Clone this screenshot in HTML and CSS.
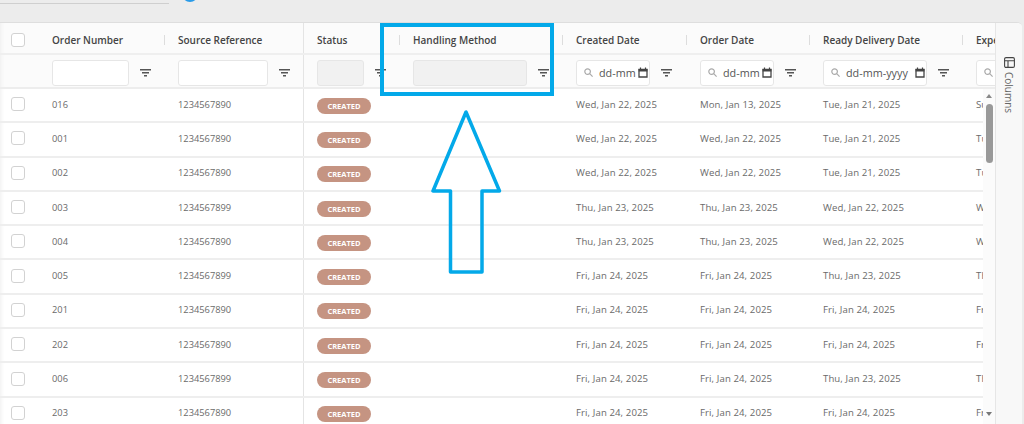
FILE: index.html
```html
<!DOCTYPE html>
<html lang="en">
<head>
<meta charset="utf-8">
<title>Orders</title>
<link rel="stylesheet" href="styles.css">
</head>
<body>
<svg width="0" height="0" class="defs">
  <symbol id="filter" viewBox="0 0 11 8"><path d="M0 .75h11M2 3.75h7M4 6.75h3" fill="none" stroke="#555" stroke-width="1.4"/></symbol>
  <symbol id="search" viewBox="0 0 9 9"><circle cx="3.6" cy="3.6" r="2.8" fill="none" stroke="#aaa" stroke-width="1.2"/><path d="M5.7 5.7L8.6 8.6" stroke="#aaa" stroke-width="1.2"/></symbol>
  <symbol id="cal" viewBox="0 0 10 11"><path d="M1 2.5h8v7.5H1z" fill="none" stroke="#444" stroke-width="1.3"/><path d="M.6 2h8.8v2.6H.6z" fill="#444"/><path d="M2.5 .5v2M7.5 .5v2" stroke="#444" stroke-width="1.2"/></symbol>
</svg>
<div class="top"><span class="top-field"></span><span class="top-dot"></span></div>
<main class="card">
  <div class="table">
    <div class="grid head">
      <div class="hc first"><span class="box"></span></div>
      <div class="hc sep">Order Number</div>
      <div class="hc sep">Source Reference</div>
      <div class="hc divide sep">Status</div>
      <div class="hc sep">Handling Method</div>
      <div class="hc sep">Created Date</div>
      <div class="hc sep">Order Date</div>
      <div class="hc sep">Ready Delivery Date</div>
      <div class="hc">Expected Date</div>
    </div>
    <div class="grid filters">
      <div class="fc first"></div>
      <div class="fc"><span class="inp"></span><svg class="fi"><use href="#filter"/></svg></div>
      <div class="fc"><span class="inp"></span><svg class="fi"><use href="#filter"/></svg></div>
      <div class="fc divide"><span class="inp off"></span><svg class="fi"><use href="#filter"/></svg></div>
      <div class="fc"><span class="inp off"></span><svg class="fi"><use href="#filter"/></svg></div>
      <div class="fc"><span class="inp date"><svg class="si"><use href="#search"/></svg><span class="dt">dd-mm</span><svg class="ci"><use href="#cal"/></svg></span><svg class="fi"><use href="#filter"/></svg></div>
      <div class="fc"><span class="inp date"><svg class="si"><use href="#search"/></svg><span class="dt">dd-mm</span><svg class="ci"><use href="#cal"/></svg></span><svg class="fi"><use href="#filter"/></svg></div>
      <div class="fc"><span class="inp date"><svg class="si"><use href="#search"/></svg><span class="dt">dd-mm-yyyy</span><svg class="ci"><use href="#cal"/></svg></span><svg class="fi"><use href="#filter"/></svg></div>
      <div class="fc"><span class="inp date"><svg class="si"><use href="#search"/></svg></span></div>
    </div>
    <div class="body">
      <div class="rows">
        <div class="grid row"><div class="c first"><span class="box"></span></div><div class="c">016</div><div class="c">1234567890</div><div class="c divide"><span class="badge">CREATED</span></div><div class="c"></div><div class="c">Wed, Jan 22, 2025</div><div class="c">Mon, Jan 13, 2025</div><div class="c">Tue, Jan 21, 2025</div><div class="c">Sun, Jan 19, 2025</div></div>
        <div class="grid row"><div class="c first"><span class="box"></span></div><div class="c">001</div><div class="c">1234567890</div><div class="c divide"><span class="badge">CREATED</span></div><div class="c"></div><div class="c">Wed, Jan 22, 2025</div><div class="c">Wed, Jan 22, 2025</div><div class="c">Tue, Jan 21, 2025</div><div class="c">Tue, Jan 21, 2025</div></div>
        <div class="grid row"><div class="c first"><span class="box"></span></div><div class="c">002</div><div class="c">1234567890</div><div class="c divide"><span class="badge">CREATED</span></div><div class="c"></div><div class="c">Wed, Jan 22, 2025</div><div class="c">Wed, Jan 22, 2025</div><div class="c">Tue, Jan 21, 2025</div><div class="c">Tue, Jan 21, 2025</div></div>
        <div class="grid row"><div class="c first"><span class="box"></span></div><div class="c">003</div><div class="c">1234567899</div><div class="c divide"><span class="badge">CREATED</span></div><div class="c"></div><div class="c">Thu, Jan 23, 2025</div><div class="c">Thu, Jan 23, 2025</div><div class="c">Wed, Jan 22, 2025</div><div class="c">Wed, Jan 22, 2025</div></div>
        <div class="grid row"><div class="c first"><span class="box"></span></div><div class="c">004</div><div class="c">1234567890</div><div class="c divide"><span class="badge">CREATED</span></div><div class="c"></div><div class="c">Thu, Jan 23, 2025</div><div class="c">Thu, Jan 23, 2025</div><div class="c">Wed, Jan 22, 2025</div><div class="c">Wed, Jan 22, 2025</div></div>
        <div class="grid row"><div class="c first"><span class="box"></span></div><div class="c">005</div><div class="c">1234567899</div><div class="c divide"><span class="badge">CREATED</span></div><div class="c"></div><div class="c">Fri, Jan 24, 2025</div><div class="c">Fri, Jan 24, 2025</div><div class="c">Thu, Jan 23, 2025</div><div class="c">Thu, Jan 23, 2025</div></div>
        <div class="grid row"><div class="c first"><span class="box"></span></div><div class="c">201</div><div class="c">1234567890</div><div class="c divide"><span class="badge">CREATED</span></div><div class="c"></div><div class="c">Fri, Jan 24, 2025</div><div class="c">Fri, Jan 24, 2025</div><div class="c">Fri, Jan 24, 2025</div><div class="c">Fri, Jan 24, 2025</div></div>
        <div class="grid row"><div class="c first"><span class="box"></span></div><div class="c">202</div><div class="c">1234567890</div><div class="c divide"><span class="badge">CREATED</span></div><div class="c"></div><div class="c">Fri, Jan 24, 2025</div><div class="c">Fri, Jan 24, 2025</div><div class="c">Fri, Jan 24, 2025</div><div class="c">Fri, Jan 24, 2025</div></div>
        <div class="grid row"><div class="c first"><span class="box"></span></div><div class="c">006</div><div class="c">1234567899</div><div class="c divide"><span class="badge">CREATED</span></div><div class="c"></div><div class="c">Fri, Jan 24, 2025</div><div class="c">Fri, Jan 24, 2025</div><div class="c">Thu, Jan 23, 2025</div><div class="c">Thu, Jan 23, 2025</div></div>
        <div class="grid row"><div class="c first"><span class="box"></span></div><div class="c">203</div><div class="c">1234567890</div><div class="c divide"><span class="badge">CREATED</span></div><div class="c"></div><div class="c">Fri, Jan 24, 2025</div><div class="c">Fri, Jan 24, 2025</div><div class="c">Fri, Jan 24, 2025</div><div class="c">Fri, Jan 24, 2025</div></div>
      </div>
      <div class="scroll">
        <span class="up"></span>
        <span class="thumb"></span>
        <span class="down"></span>
      </div>
    </div>
  </div>
  <aside class="panel">
    <svg class="pi" viewBox="0 0 11 11"><rect x=".6" y=".6" width="9.8" height="9.8" rx="1.4" fill="none" stroke="#444" stroke-width="1.1"/><path d="M.6 3.800h9.800M4 3.800v6.600" fill="none" stroke="#444" stroke-width="1.1"/></svg>
    <span class="pt">Columns</span>
  </aside>
</main>
<svg class="note" viewBox="0 0 1024 424" aria-hidden="true">
  <rect x="382" y="25" width="170" height="69" fill="none" stroke="#03a9e9" stroke-width="4"/>
  <path d="M466 112L433 191H450.500V272H482V191H499.500Z" fill="none" stroke="#03a9e9" stroke-width="3.500" stroke-linejoin="round"/>
</svg>
</body>
</html>
```
FILE: styles.css
```css
* { box-sizing: border-box; }
html, body { height: 100%; }
body {
  margin: 0;
  height: 424px;
  overflow: hidden;
  background: #ececec;
  font-family: "Open Sans", "Noto Sans", sans-serif;
  color: #6a6a6a;
  position: relative;
}
.defs { display: block; height: 0; }
.top { height: 22px; display: flex; align-items: flex-start; overflow: hidden; }
.top-field { width: 169px; height: 4px; border-bottom: 1px solid #cfcfcf; }
.top-dot { width: 16px; height: 16px; margin: -14px 0 0 13px; border-radius: 50%; background: #2a9be8; }
.card {
  display: flex;
  width: 1022px;
  height: 402px;
  background: #fff;
  border-top: 1px solid #dedede;
  border-top-right-radius: 5px;
  overflow: hidden;
}
.table { width: 995px; flex: none; display: flex; flex-direction: column; overflow: hidden; }
.grid {
  display: grid;
  grid-template-columns: 39px 126px 139px 96px 163px 124px 123px 153px 40px;
}
.head { height: 32px; background: #fbfbfb; border-bottom: 2px solid #efefef; flex: none; }
.hc {
  position: relative;
  display: flex;
  align-items: center;
  padding: 3px 0 0 13px;
  font-size: 10px;
  font-weight: 600;
  color: #444;
  white-space: nowrap;
  overflow: hidden;
}
.hc.first, .fc.first, .c.first { padding-left: 11px; }
.sep::after {
  content: "";
  position: absolute;
  right: 0;
  top: 12px;
  width: 1.500px;
  height: 10px;
  background: #ddd;
}
.divide { border-left: 1px solid #e4e4e4; margin-left: -1px; padding-left: 13px !important; }
.filters { height: 34px; background: #fbfbfb; border-bottom: 2px solid #ededed; flex: none; }
.fc { display: flex; align-items: center; padding: 3px 0 0 13px; gap: 11px; overflow: hidden; }
.inp {
  flex: none;
  height: 26px;
  background: #fff;
  border: 1px solid #e6e6e6;
  border-radius: 3px;
  display: flex;
  align-items: center;
}
.fc:nth-child(2) .inp { width: 77px; }
.fc:nth-child(3) .inp { width: 90px; }
.fc:nth-child(4) .inp { width: 47px; }
.fc:nth-child(5) .inp { width: 114px; }
.fc:nth-child(6) .inp, .fc:nth-child(7) .inp { width: 74px; }
.fc:nth-child(8) .inp { width: 104px; }
.fc:nth-child(9) .inp { width: 60px; }
.inp.off { background: #f1f1f1; }
.fi { width: 11px; height: 8px; flex: none; }
.si { width: 9px; height: 9px; margin-left: 7px; flex: none; }
.ci { width: 10px; height: 11px; margin-left: auto; margin-right: 1px; flex: none; }
.dt { margin-left: 6px; font-size: 10.800px; color: #555; }
.body { flex: 1; display: flex; min-height: 0; }
.rows { width: 983px; flex: none; overflow: hidden; }
.row { height: 34.300px; border-bottom: 2px solid #eeeeee; }
.c {
  display: flex;
  align-items: center;
  padding: 0 0 2px 13px;
  font-size: 9.300px;
  white-space: nowrap;
  overflow: hidden;
}
.c:nth-child(n+6) { font-size: 9.600px; letter-spacing: .1px; }
.first { box-shadow: inset 5px 0 4px -4px #eee; }
.box {
  width: 14px;
  height: 14px;
  border: 1.500px solid #d2d2d2;
  border-radius: 3px;
  background: #fff;
  display: block;
}
.badge {
  margin-top: 3px;
  width: 54px;
  height: 16px;
  border-radius: 8px;
  background: #c49280;
  color: #fff;
  font-size: 7.500px;
  font-weight: 700;
  display: flex;
  align-items: center;
  justify-content: center;
  opacity: .98;
}
.scroll {
  flex: 1;
  background: #fbfbfb;
  display: flex;
  flex-direction: column;
  align-items: center;
  padding-top: 5px;
}
.up { width: 0; height: 0; border: 3.500px solid transparent; border-top: 0; border-bottom: 4px solid #888; }
.thumb { width: 7px; height: 59px; margin-top: 6px; border-radius: 4px; background: #999; }
.down { width: 0; height: 0; margin-top: auto; margin-bottom: 8px; border: 3.500px solid transparent; border-bottom: 0; border-top: 4px solid #777; }
.panel {
  flex: 1;
  background: #f8f8f8;
  border-left: 1px solid #e6e6e6;
  display: flex;
  flex-direction: column;
  align-items: center;
  padding-top: 34px;
}
.pi { width: 11px; height: 11px; flex: none; }
.pt {
  writing-mode: vertical-rl;
  margin-top: 4px;
  font-size: 10px;
  color: #666;
}
.note { position: absolute; left: 0; top: 0; width: 1024px; height: 424px; pointer-events: none; }
```
